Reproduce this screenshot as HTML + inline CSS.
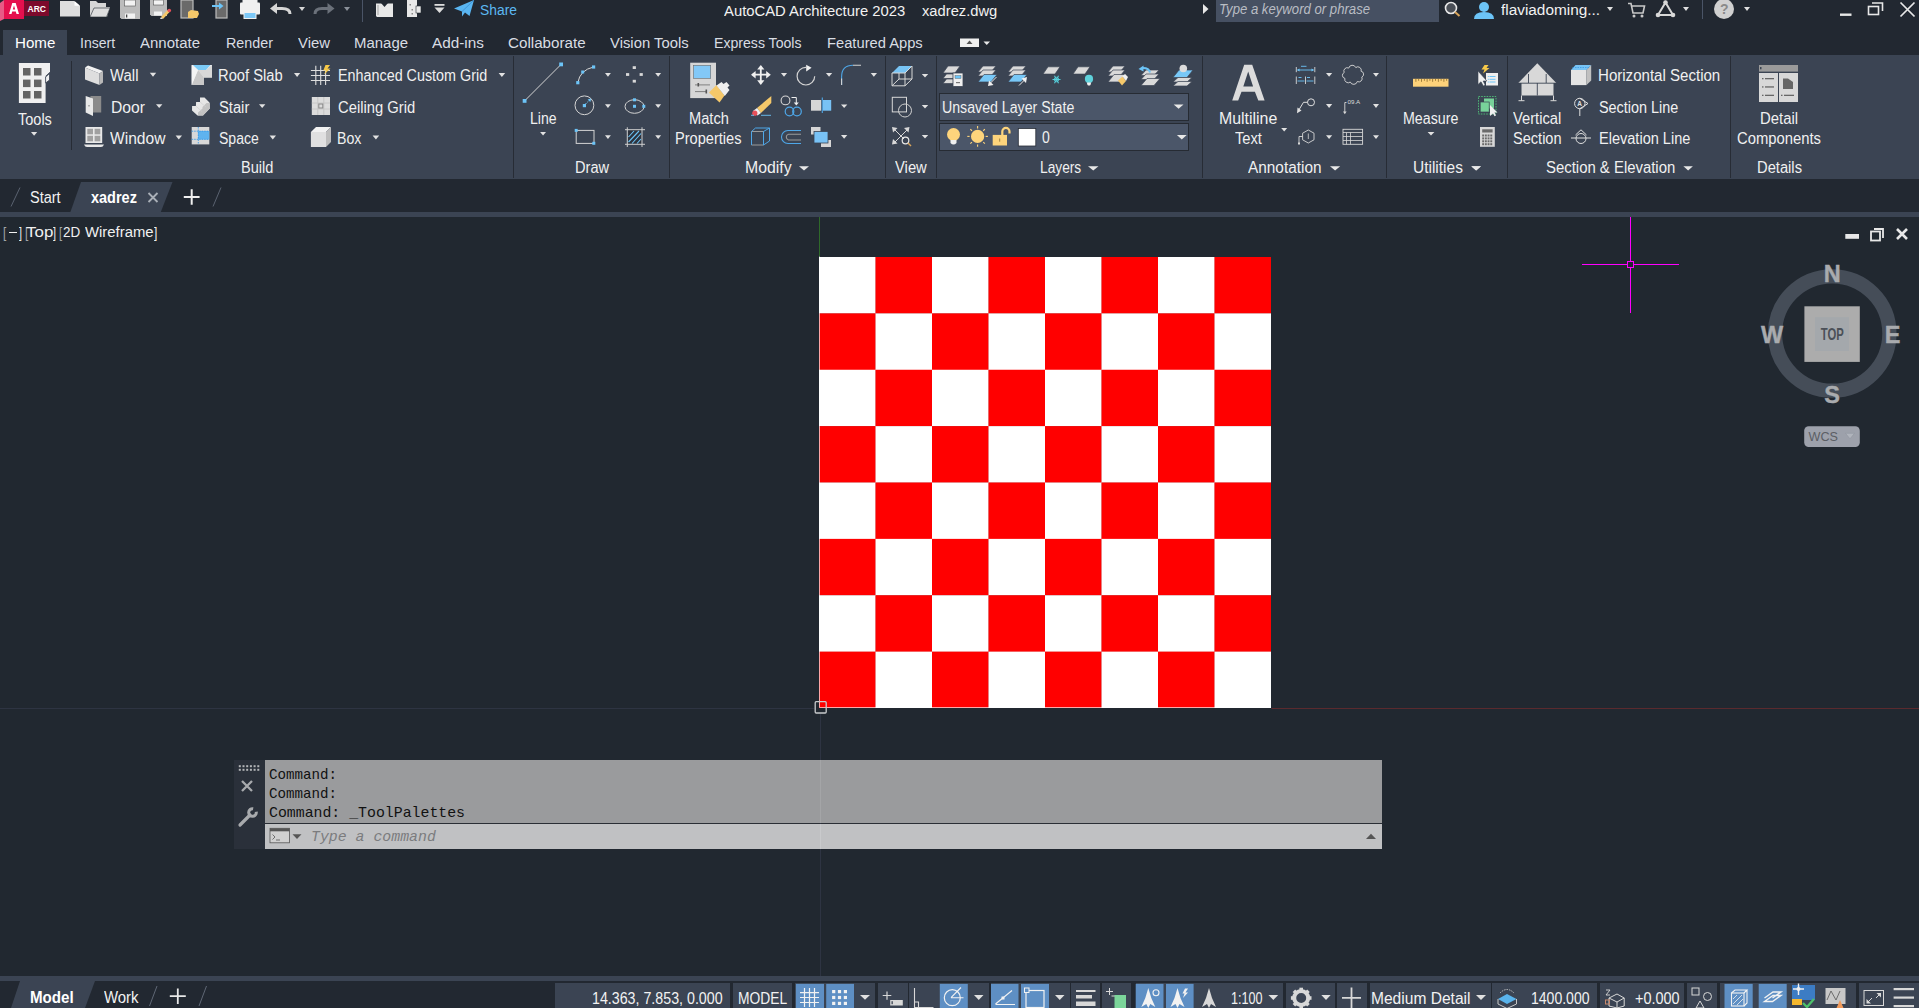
<!DOCTYPE html><html><head><meta charset="utf-8"><style>html,body{margin:0;padding:0;width:1919px;height:1008px;overflow:hidden;background:#222831;}.a{position:absolute;}.t{white-space:pre;}svg{overflow:visible;}</style></head><body><div class="a" style="left:0px;top:0px;width:1919px;height:55px;background:#222831;"></div>
<div class="a" style="left:1216px;top:0px;width:223px;height:22px;background:#465062;"></div>
<div class="a t" style="left:1219.00px;top:1.95px;font-family:'Liberation Sans', sans-serif;font-size:14px;line-height:14px;color:#b9bdc4;font-style:italic;transform:scaleX(0.9391);transform-origin:0 0;">Type a keyword or phrase</div>
<div class="a t" style="left:480.00px;top:1.68px;font-family:'Liberation Sans', sans-serif;font-size:15.5px;line-height:15.5px;color:#5cb8f2;transform:scaleX(0.8937);transform-origin:0 0;">Share</div>
<div class="a t" style="left:1501.00px;top:2.38px;font-family:'Liberation Sans', sans-serif;font-size:15.5px;line-height:15.5px;color:#f2f2f2;transform:scaleX(0.9910);transform-origin:0 0;">flaviadoming...</div>
<div class="a" style="left:3px;top:30px;width:64px;height:25px;background:#3b4453;"></div>
<div class="a t" style="left:14.70px;top:35.38px;font-family:'Liberation Sans', sans-serif;font-size:15.5px;line-height:15.5px;color:#ffffff;transform:scaleX(0.9758);transform-origin:0 0;">Home</div>
<div class="a t" style="left:80.40px;top:35.38px;font-family:'Liberation Sans', sans-serif;font-size:15.5px;line-height:15.5px;color:#d9dde3;transform:scaleX(0.9072);transform-origin:0 0;">Insert</div>
<div class="a t" style="left:140.00px;top:35.38px;font-family:'Liberation Sans', sans-serif;font-size:15.5px;line-height:15.5px;color:#d9dde3;transform:scaleX(0.9662);transform-origin:0 0;">Annotate</div>
<div class="a t" style="left:226.00px;top:35.38px;font-family:'Liberation Sans', sans-serif;font-size:15.5px;line-height:15.5px;color:#d9dde3;transform:scaleX(0.9252);transform-origin:0 0;">Render</div>
<div class="a t" style="left:298.00px;top:35.38px;font-family:'Liberation Sans', sans-serif;font-size:15.5px;line-height:15.5px;color:#d9dde3;transform:scaleX(0.9581);transform-origin:0 0;">View</div>
<div class="a t" style="left:354.00px;top:35.38px;font-family:'Liberation Sans', sans-serif;font-size:15.5px;line-height:15.5px;color:#d9dde3;transform:scaleX(0.9643);transform-origin:0 0;">Manage</div>
<div class="a t" style="left:432.00px;top:35.38px;font-family:'Liberation Sans', sans-serif;font-size:15.5px;line-height:15.5px;color:#d9dde3;transform:scaleX(0.9886);transform-origin:0 0;">Add-ins</div>
<div class="a t" style="left:508.00px;top:35.38px;font-family:'Liberation Sans', sans-serif;font-size:15.5px;line-height:15.5px;color:#d9dde3;transform:scaleX(0.9786);transform-origin:0 0;">Collaborate</div>
<div class="a t" style="left:610.40px;top:35.38px;font-family:'Liberation Sans', sans-serif;font-size:15.5px;line-height:15.5px;color:#d9dde3;transform:scaleX(0.9574);transform-origin:0 0;">Vision Tools</div>
<div class="a t" style="left:714.20px;top:35.38px;font-family:'Liberation Sans', sans-serif;font-size:15.5px;line-height:15.5px;color:#d9dde3;transform:scaleX(0.9096);transform-origin:0 0;">Express Tools</div>
<div class="a t" style="left:826.50px;top:35.38px;font-family:'Liberation Sans', sans-serif;font-size:15.5px;line-height:15.5px;color:#d9dde3;transform:scaleX(0.9494);transform-origin:0 0;">Featured Apps</div>
<div class="a t" style="left:724.40px;top:2.88px;font-family:'Liberation Sans', sans-serif;font-size:15.5px;line-height:15.5px;color:#f2f2f2;transform:scaleX(0.9562);transform-origin:0 0;">AutoCAD Architecture 2023</div>
<div class="a t" style="left:922.00px;top:2.88px;font-family:'Liberation Sans', sans-serif;font-size:15.5px;line-height:15.5px;color:#f2f2f2;transform:scaleX(0.9496);transform-origin:0 0;">xadrez.dwg</div>
<div class="a" style="left:0px;top:55px;width:1919px;height:124px;background:#3b4453;"></div>
<div class="a" style="left:71px;top:61px;width:1px;height:89px;background:#272c35;"></div>
<div class="a" style="left:513px;top:56px;width:1px;height:122px;background:#272c35;"></div>
<div class="a" style="left:669px;top:56px;width:1px;height:122px;background:#272c35;"></div>
<div class="a" style="left:885px;top:56px;width:1px;height:122px;background:#272c35;"></div>
<div class="a" style="left:936px;top:56px;width:1px;height:122px;background:#272c35;"></div>
<div class="a" style="left:1202px;top:56px;width:1px;height:122px;background:#272c35;"></div>
<div class="a" style="left:1386px;top:56px;width:1px;height:122px;background:#272c35;"></div>
<div class="a" style="left:1507px;top:56px;width:1px;height:122px;background:#272c35;"></div>
<div class="a" style="left:1730px;top:56px;width:1px;height:122px;background:#272c35;"></div>
<div class="a t" style="left:17.60px;top:111.96px;font-family:'Liberation Sans', sans-serif;font-size:16px;line-height:16px;color:#f0f0f0;transform:scaleX(0.9064);transform-origin:0 0;">Tools</div>
<div class="a t" style="left:110.00px;top:68.46px;font-family:'Liberation Sans', sans-serif;font-size:16px;line-height:16px;color:#f0f0f0;transform:scaleX(0.9344);transform-origin:0 0;">Wall</div>
<div class="a t" style="left:111.00px;top:99.76px;font-family:'Liberation Sans', sans-serif;font-size:16px;line-height:16px;color:#f0f0f0;transform:scaleX(0.9798);transform-origin:0 0;">Door</div>
<div class="a t" style="left:110.00px;top:130.96px;font-family:'Liberation Sans', sans-serif;font-size:16px;line-height:16px;color:#f0f0f0;transform:scaleX(0.9737);transform-origin:0 0;">Window</div>
<div class="a t" style="left:218.00px;top:68.46px;font-family:'Liberation Sans', sans-serif;font-size:16px;line-height:16px;color:#f0f0f0;transform:scaleX(0.9203);transform-origin:0 0;">Roof Slab</div>
<div class="a t" style="left:219.00px;top:99.76px;font-family:'Liberation Sans', sans-serif;font-size:16px;line-height:16px;color:#f0f0f0;transform:scaleX(0.9210);transform-origin:0 0;">Stair</div>
<div class="a t" style="left:219.00px;top:130.96px;font-family:'Liberation Sans', sans-serif;font-size:16px;line-height:16px;color:#f0f0f0;transform:scaleX(0.8767);transform-origin:0 0;">Space</div>
<div class="a t" style="left:338.20px;top:68.46px;font-family:'Liberation Sans', sans-serif;font-size:16px;line-height:16px;color:#f0f0f0;transform:scaleX(0.8966);transform-origin:0 0;">Enhanced Custom Grid</div>
<div class="a t" style="left:338.20px;top:99.76px;font-family:'Liberation Sans', sans-serif;font-size:16px;line-height:16px;color:#f0f0f0;transform:scaleX(0.9234);transform-origin:0 0;">Ceiling Grid</div>
<div class="a t" style="left:337.40px;top:130.96px;font-family:'Liberation Sans', sans-serif;font-size:16px;line-height:16px;color:#f0f0f0;transform:scaleX(0.8841);transform-origin:0 0;">Box</div>
<div class="a t" style="left:240.60px;top:160.46px;font-family:'Liberation Sans', sans-serif;font-size:16px;line-height:16px;color:#f0f0f0;transform:scaleX(0.9101);transform-origin:0 0;">Build</div>
<div class="a t" style="left:530.00px;top:111.46px;font-family:'Liberation Sans', sans-serif;font-size:16px;line-height:16px;color:#f0f0f0;transform:scaleX(0.8779);transform-origin:0 0;">Line</div>
<div class="a t" style="left:574.50px;top:160.46px;font-family:'Liberation Sans', sans-serif;font-size:16px;line-height:16px;color:#f0f0f0;transform:scaleX(0.9118);transform-origin:0 0;">Draw</div>
<div class="a t" style="left:688.60px;top:111.46px;font-family:'Liberation Sans', sans-serif;font-size:16px;line-height:16px;color:#f0f0f0;transform:scaleX(0.9151);transform-origin:0 0;">Match</div>
<div class="a t" style="left:675.40px;top:130.96px;font-family:'Liberation Sans', sans-serif;font-size:16px;line-height:16px;color:#f0f0f0;transform:scaleX(0.9122);transform-origin:0 0;">Properties</div>
<div class="a t" style="left:745.30px;top:160.46px;font-family:'Liberation Sans', sans-serif;font-size:16px;line-height:16px;color:#f0f0f0;transform:scaleX(0.9894);transform-origin:0 0;">Modify</div>
<div class="a t" style="left:895.00px;top:160.46px;font-family:'Liberation Sans', sans-serif;font-size:16px;line-height:16px;color:#f0f0f0;transform:scaleX(0.9244);transform-origin:0 0;">View</div>
<div class="a t" style="left:1040.20px;top:160.46px;font-family:'Liberation Sans', sans-serif;font-size:16px;line-height:16px;color:#f0f0f0;transform:scaleX(0.8583);transform-origin:0 0;">Layers</div>
<div class="a t" style="left:1219.00px;top:111.46px;font-family:'Liberation Sans', sans-serif;font-size:16px;line-height:16px;color:#f0f0f0;transform:scaleX(0.9932);transform-origin:0 0;">Multiline</div>
<div class="a t" style="left:1235.00px;top:130.96px;font-family:'Liberation Sans', sans-serif;font-size:16px;line-height:16px;color:#f0f0f0;transform:scaleX(0.9181);transform-origin:0 0;">Text</div>
<div class="a t" style="left:1248.40px;top:160.46px;font-family:'Liberation Sans', sans-serif;font-size:16px;line-height:16px;color:#f0f0f0;transform:scaleX(0.9608);transform-origin:0 0;">Annotation</div>
<div class="a t" style="left:1403.30px;top:111.46px;font-family:'Liberation Sans', sans-serif;font-size:16px;line-height:16px;color:#f0f0f0;transform:scaleX(0.8892);transform-origin:0 0;">Measure</div>
<div class="a t" style="left:1413.00px;top:160.46px;font-family:'Liberation Sans', sans-serif;font-size:16px;line-height:16px;color:#f0f0f0;transform:scaleX(0.9671);transform-origin:0 0;">Utilities</div>
<div class="a t" style="left:1512.90px;top:111.46px;font-family:'Liberation Sans', sans-serif;font-size:16px;line-height:16px;color:#f0f0f0;transform:scaleX(0.9200);transform-origin:0 0;">Vertical</div>
<div class="a t" style="left:1513.40px;top:130.96px;font-family:'Liberation Sans', sans-serif;font-size:16px;line-height:16px;color:#f0f0f0;transform:scaleX(0.9101);transform-origin:0 0;">Section</div>
<div class="a t" style="left:1597.70px;top:68.46px;font-family:'Liberation Sans', sans-serif;font-size:16px;line-height:16px;color:#f0f0f0;transform:scaleX(0.9414);transform-origin:0 0;">Horizontal Section</div>
<div class="a t" style="left:1598.50px;top:99.76px;font-family:'Liberation Sans', sans-serif;font-size:16px;line-height:16px;color:#f0f0f0;transform:scaleX(0.9001);transform-origin:0 0;">Section Line</div>
<div class="a t" style="left:1598.50px;top:130.96px;font-family:'Liberation Sans', sans-serif;font-size:16px;line-height:16px;color:#f0f0f0;transform:scaleX(0.9085);transform-origin:0 0;">Elevation Line</div>
<div class="a t" style="left:1545.70px;top:160.46px;font-family:'Liberation Sans', sans-serif;font-size:16px;line-height:16px;color:#f0f0f0;transform:scaleX(0.9316);transform-origin:0 0;">Section &amp; Elevation</div>
<div class="a t" style="left:1760.00px;top:111.46px;font-family:'Liberation Sans', sans-serif;font-size:16px;line-height:16px;color:#f0f0f0;transform:scaleX(0.9291);transform-origin:0 0;">Detail</div>
<div class="a t" style="left:1737.00px;top:130.96px;font-family:'Liberation Sans', sans-serif;font-size:16px;line-height:16px;color:#f0f0f0;transform:scaleX(0.9261);transform-origin:0 0;">Components</div>
<div class="a t" style="left:1757.00px;top:160.46px;font-family:'Liberation Sans', sans-serif;font-size:16px;line-height:16px;color:#f0f0f0;transform:scaleX(0.9202);transform-origin:0 0;">Details</div>
<div class="a" style="left:939px;top:93px;width:250px;height:28px;background:#4b5669;border:1px solid #262b33;box-sizing:border-box;"></div>
<div class="a" style="left:939px;top:123px;width:250px;height:28px;background:#4b5669;border:1px solid #262b33;box-sizing:border-box;"></div>
<div class="a t" style="left:942.20px;top:99.96px;font-family:'Liberation Sans', sans-serif;font-size:16px;line-height:16px;color:#f0f0f0;transform:scaleX(0.8855);transform-origin:0 0;">Unsaved Layer State</div>
<div class="a t" style="left:1042.20px;top:130.46px;font-family:'Liberation Sans', sans-serif;font-size:16px;line-height:16px;color:#f0f0f0;transform:scaleX(0.8764);transform-origin:0 0;">0</div>
<div class="a" style="left:0px;top:179px;width:1919px;height:33px;background:#222831;"></div>
<div class="a" style="left:0px;top:212px;width:1919px;height:5px;background:#3b4453;"></div>
<svg class="a" style="left:0px;top:179px;" width="250" height="33" viewBox="0 0 250 33" preserveAspectRatio="none"><polygon points="81,3 172.5,3 160.8,33 70.4,33" fill="#3b4453"/></svg>
<div class="a t" style="left:30.20px;top:190.46px;font-family:'Liberation Sans', sans-serif;font-size:16px;line-height:16px;color:#f2f2f2;transform:scaleX(0.9053);transform-origin:0 0;">Start</div>
<div class="a t" style="left:91.00px;top:190.46px;font-family:'Liberation Sans', sans-serif;font-size:16px;line-height:16px;color:#ffffff;font-weight:700;transform:scaleX(0.9053);transform-origin:0 0;">xadrez</div>
<div class="a" style="left:0px;top:217px;width:1919px;height:759px;background:#212830;"></div>
<div class="a t" style="left:3.05px;top:224.88px;font-family:'Liberation Sans', sans-serif;font-size:15.5px;line-height:15.5px;color:#a4a6a9;transform:scaleX(0.7558);transform-origin:0 0;">[</div>
<div class="a t" style="left:19.00px;top:224.88px;font-family:'Liberation Sans', sans-serif;font-size:15.5px;line-height:15.5px;color:#f0f0f0;transform:scaleX(0.6977);transform-origin:0 0;">]</div>
<div class="a t" style="left:25.10px;top:224.88px;font-family:'Liberation Sans', sans-serif;font-size:15.5px;line-height:15.5px;color:#a4a6a9;transform:scaleX(0.7674);transform-origin:0 0;">[</div>
<div class="a t" style="left:53.00px;top:224.88px;font-family:'Liberation Sans', sans-serif;font-size:15.5px;line-height:15.5px;color:#f0f0f0;transform:scaleX(0.6977);transform-origin:0 0;">]</div>
<div class="a t" style="left:59.30px;top:224.88px;font-family:'Liberation Sans', sans-serif;font-size:15.5px;line-height:15.5px;color:#a4a6a9;transform:scaleX(0.7209);transform-origin:0 0;">[</div>
<div class="a t" style="left:154.10px;top:224.88px;font-family:'Liberation Sans', sans-serif;font-size:15.5px;line-height:15.5px;color:#f0f0f0;transform:scaleX(0.7674);transform-origin:0 0;">]</div>
<div class="a t" style="left:25.70px;top:223.88px;font-family:'Liberation Sans', sans-serif;font-size:15.5px;line-height:15.5px;color:#f0f0f0;transform:scaleX(1.0920);transform-origin:0 0;">Top</div>
<div class="a t" style="left:62.50px;top:223.88px;font-family:'Liberation Sans', sans-serif;font-size:15.5px;line-height:15.5px;color:#f0f0f0;transform:scaleX(0.8687);transform-origin:0 0;">2D</div>
<div class="a t" style="left:85.20px;top:223.88px;font-family:'Liberation Sans', sans-serif;font-size:15.5px;line-height:15.5px;color:#f0f0f0;transform:scaleX(0.9594);transform-origin:0 0;">Wireframe</div>
<div class="a" style="left:8.9px;top:231.7px;width:8.2px;height:1.4px;background:#f0f0f0;"></div>
<svg class="a" style="left:819px;top:257px;" width="452" height="451" viewBox="0 0 452 452" preserveAspectRatio="none"><rect x="0.00" y="0.00" width="56.80" height="56.80" fill="#ffffff"/><rect x="56.50" y="0.00" width="56.80" height="56.80" fill="#ff0000"/><rect x="113.00" y="0.00" width="56.80" height="56.80" fill="#ffffff"/><rect x="169.50" y="0.00" width="56.80" height="56.80" fill="#ff0000"/><rect x="226.00" y="0.00" width="56.80" height="56.80" fill="#ffffff"/><rect x="282.50" y="0.00" width="56.80" height="56.80" fill="#ff0000"/><rect x="339.00" y="0.00" width="56.80" height="56.80" fill="#ffffff"/><rect x="395.50" y="0.00" width="56.50" height="56.80" fill="#ff0000"/><rect x="0.00" y="56.50" width="56.80" height="56.80" fill="#ff0000"/><rect x="56.50" y="56.50" width="56.80" height="56.80" fill="#ffffff"/><rect x="113.00" y="56.50" width="56.80" height="56.80" fill="#ff0000"/><rect x="169.50" y="56.50" width="56.80" height="56.80" fill="#ffffff"/><rect x="226.00" y="56.50" width="56.80" height="56.80" fill="#ff0000"/><rect x="282.50" y="56.50" width="56.80" height="56.80" fill="#ffffff"/><rect x="339.00" y="56.50" width="56.80" height="56.80" fill="#ff0000"/><rect x="395.50" y="56.50" width="56.50" height="56.80" fill="#ffffff"/><rect x="0.00" y="113.00" width="56.80" height="56.80" fill="#ffffff"/><rect x="56.50" y="113.00" width="56.80" height="56.80" fill="#ff0000"/><rect x="113.00" y="113.00" width="56.80" height="56.80" fill="#ffffff"/><rect x="169.50" y="113.00" width="56.80" height="56.80" fill="#ff0000"/><rect x="226.00" y="113.00" width="56.80" height="56.80" fill="#ffffff"/><rect x="282.50" y="113.00" width="56.80" height="56.80" fill="#ff0000"/><rect x="339.00" y="113.00" width="56.80" height="56.80" fill="#ffffff"/><rect x="395.50" y="113.00" width="56.50" height="56.80" fill="#ff0000"/><rect x="0.00" y="169.50" width="56.80" height="56.80" fill="#ff0000"/><rect x="56.50" y="169.50" width="56.80" height="56.80" fill="#ffffff"/><rect x="113.00" y="169.50" width="56.80" height="56.80" fill="#ff0000"/><rect x="169.50" y="169.50" width="56.80" height="56.80" fill="#ffffff"/><rect x="226.00" y="169.50" width="56.80" height="56.80" fill="#ff0000"/><rect x="282.50" y="169.50" width="56.80" height="56.80" fill="#ffffff"/><rect x="339.00" y="169.50" width="56.80" height="56.80" fill="#ff0000"/><rect x="395.50" y="169.50" width="56.50" height="56.80" fill="#ffffff"/><rect x="0.00" y="226.00" width="56.80" height="56.80" fill="#ffffff"/><rect x="56.50" y="226.00" width="56.80" height="56.80" fill="#ff0000"/><rect x="113.00" y="226.00" width="56.80" height="56.80" fill="#ffffff"/><rect x="169.50" y="226.00" width="56.80" height="56.80" fill="#ff0000"/><rect x="226.00" y="226.00" width="56.80" height="56.80" fill="#ffffff"/><rect x="282.50" y="226.00" width="56.80" height="56.80" fill="#ff0000"/><rect x="339.00" y="226.00" width="56.80" height="56.80" fill="#ffffff"/><rect x="395.50" y="226.00" width="56.50" height="56.80" fill="#ff0000"/><rect x="0.00" y="282.50" width="56.80" height="56.80" fill="#ff0000"/><rect x="56.50" y="282.50" width="56.80" height="56.80" fill="#ffffff"/><rect x="113.00" y="282.50" width="56.80" height="56.80" fill="#ff0000"/><rect x="169.50" y="282.50" width="56.80" height="56.80" fill="#ffffff"/><rect x="226.00" y="282.50" width="56.80" height="56.80" fill="#ff0000"/><rect x="282.50" y="282.50" width="56.80" height="56.80" fill="#ffffff"/><rect x="339.00" y="282.50" width="56.80" height="56.80" fill="#ff0000"/><rect x="395.50" y="282.50" width="56.50" height="56.80" fill="#ffffff"/><rect x="0.00" y="339.00" width="56.80" height="56.80" fill="#ffffff"/><rect x="56.50" y="339.00" width="56.80" height="56.80" fill="#ff0000"/><rect x="113.00" y="339.00" width="56.80" height="56.80" fill="#ffffff"/><rect x="169.50" y="339.00" width="56.80" height="56.80" fill="#ff0000"/><rect x="226.00" y="339.00" width="56.80" height="56.80" fill="#ffffff"/><rect x="282.50" y="339.00" width="56.80" height="56.80" fill="#ff0000"/><rect x="339.00" y="339.00" width="56.80" height="56.80" fill="#ffffff"/><rect x="395.50" y="339.00" width="56.50" height="56.80" fill="#ff0000"/><rect x="0.00" y="395.50" width="56.80" height="56.50" fill="#ff0000"/><rect x="56.50" y="395.50" width="56.80" height="56.50" fill="#ffffff"/><rect x="113.00" y="395.50" width="56.80" height="56.50" fill="#ff0000"/><rect x="169.50" y="395.50" width="56.80" height="56.50" fill="#ffffff"/><rect x="226.00" y="395.50" width="56.80" height="56.50" fill="#ff0000"/><rect x="282.50" y="395.50" width="56.80" height="56.50" fill="#ffffff"/><rect x="339.00" y="395.50" width="56.80" height="56.50" fill="#ff0000"/><rect x="395.50" y="395.50" width="56.50" height="56.50" fill="#ffffff"/></svg>
<div class="a" style="left:234px;top:760px;width:31px;height:89px;background:#2a303a;"></div>
<div class="a" style="left:265px;top:760px;width:1117px;height:63px;background:#9a9b9d;"></div>
<div class="a" style="left:265px;top:823px;width:1117px;height:1px;background:#2a2e35;"></div>
<div class="a" style="left:265px;top:824px;width:1117px;height:25px;background:#c0c1c3;"></div>
<div class="a t" style="left:268.70px;top:767.50px;font-family:'Liberation Mono', monospace;font-size:15px;line-height:15px;color:#111111;transform:scaleX(0.9444);transform-origin:0 0;">Command:</div>
<div class="a t" style="left:268.70px;top:786.50px;font-family:'Liberation Mono', monospace;font-size:15px;line-height:15px;color:#111111;transform:scaleX(0.9444);transform-origin:0 0;">Command:</div>
<div class="a t" style="left:268.70px;top:805.50px;font-family:'Liberation Mono', monospace;font-size:15px;line-height:15px;color:#111111;transform:scaleX(0.9899);transform-origin:0 0;">Command: _ToolPalettes</div>
<div class="a t" style="left:310.70px;top:829.79px;font-family:'Liberation Mono', monospace;font-size:15px;line-height:15px;color:#7b7c7e;font-style:italic;transform:scaleX(0.9905);transform-origin:0 0;">Type a command</div>
<div class="a" style="left:0px;top:976px;width:1919px;height:5px;background:#3b4453;"></div>
<div class="a" style="left:0px;top:981px;width:1919px;height:27px;background:#222831;"></div>
<svg class="a" style="left:0px;top:981px;" width="100" height="27" viewBox="0 0 100 27" preserveAspectRatio="none"><polygon points="20,0 95,0 85,27 11,27" fill="#3b4453"/></svg>
<div class="a t" style="left:30.30px;top:990.46px;font-family:'Liberation Sans', sans-serif;font-size:16px;line-height:16px;color:#ffffff;font-weight:700;transform:scaleX(0.9459);transform-origin:0 0;">Model</div>
<div class="a t" style="left:104.00px;top:990.46px;font-family:'Liberation Sans', sans-serif;font-size:16px;line-height:16px;color:#f2f2f2;transform:scaleX(0.9326);transform-origin:0 0;">Work</div>
<div class="a" style="left:555px;top:983px;width:1364px;height:25px;background:#3b4453;"></div>
<div class="a t" style="left:592.30px;top:991.06px;font-family:'Liberation Sans', sans-serif;font-size:16px;line-height:16px;color:#f2f2f2;transform:scaleX(0.8896);transform-origin:0 0;">14.363, 7.853, 0.000</div>
<div class="a t" style="left:737.90px;top:991.06px;font-family:'Liberation Sans', sans-serif;font-size:16px;line-height:16px;color:#f2f2f2;transform:scaleX(0.8647);transform-origin:0 0;">MODEL</div>
<div class="a t" style="left:1231.30px;top:991.06px;font-family:'Liberation Sans', sans-serif;font-size:16px;line-height:16px;color:#f2f2f2;transform:scaleX(0.7875);transform-origin:0 0;">1:100</div>
<div class="a t" style="left:1371.00px;top:991.06px;font-family:'Liberation Sans', sans-serif;font-size:16px;line-height:16px;color:#f2f2f2;transform:scaleX(0.9726);transform-origin:0 0;">Medium Detail</div>
<div class="a t" style="left:1530.50px;top:991.06px;font-family:'Liberation Sans', sans-serif;font-size:16px;line-height:16px;color:#f2f2f2;transform:scaleX(0.8771);transform-origin:0 0;">1400.000</div>
<div class="a t" style="left:1635.00px;top:991.06px;font-family:'Liberation Sans', sans-serif;font-size:16px;line-height:16px;color:#f2f2f2;transform:scaleX(0.9028);transform-origin:0 0;">+0.000</div>
<div class="a" style="left:730.2px;top:983px;width:2.7px;height:25px;background:#222831;"></div>
<div class="a" style="left:792.1px;top:983px;width:2.8px;height:25px;background:#222831;"></div>
<div class="a" style="left:875.2px;top:983px;width:2.6px;height:25px;background:#222831;"></div>
<div class="a" style="left:907.6px;top:983px;width:1.9px;height:25px;background:#222831;"></div>
<div class="a" style="left:988.6px;top:983px;width:2.4px;height:25px;background:#222831;"></div>
<div class="a" style="left:1069.6px;top:983px;width:1.9px;height:25px;background:#222831;"></div>
<div class="a" style="left:1100.4px;top:983px;width:2.0px;height:25px;background:#222831;"></div>
<div class="a" style="left:1131.3px;top:983px;width:4.4px;height:25px;background:#222831;"></div>
<div class="a" style="left:1282.9px;top:983px;width:3.1px;height:25px;background:#222831;"></div>
<div class="a" style="left:1335.4px;top:983px;width:1.9px;height:25px;background:#222831;"></div>
<div class="a" style="left:1366.7px;top:983px;width:3.3px;height:25px;background:#222831;"></div>
<div class="a" style="left:1490.7px;top:983px;width:1.3px;height:25px;background:#222831;"></div>
<div class="a" style="left:1596.9px;top:983px;width:3.1px;height:25px;background:#222831;"></div>
<div class="a" style="left:1684.2px;top:983px;width:2.5px;height:25px;background:#222831;"></div>
<div class="a" style="left:1716.9px;top:983px;width:3.1px;height:25px;background:#222831;"></div>
<div class="a" style="left:1855.8px;top:983px;width:3.3px;height:25px;background:#222831;"></div>
<svg class="a" style="left:0;top:0" width="1919" height="1008" viewBox="0 0 1919 1008"><polygon points="18.9,63 50,63 50,72 45.6,76 45.6,103 18.9,103" fill="#f0f0f0"/><polygon points="46,76 50,72 50,80 46,84" fill="#3b4453"/><polygon points="45.6,77 49.5,73.5 49.5,80 45.6,83" fill="#f0f0f0" stroke="#3b4453" stroke-width="0.8"/><rect x="23" y="68" width="7.5" height="7.5" fill="#646464"/><rect x="34" y="68" width="7.5" height="7.5" fill="#646464"/><rect x="23" y="79.6" width="7.5" height="7.5" fill="#646464"/><rect x="34" y="79.6" width="7.5" height="7.5" fill="#646464"/><rect x="23" y="91" width="7.5" height="7.5" fill="#646464"/><rect x="34" y="91" width="7.5" height="7.5" fill="#646464"/><polygon points="31,131.9 37.2,131.9 34.1,135.70000000000002" fill="#e2e2e2"/><polygon points="85,67.5 88,65.5 103,71 99.5,73.5" fill="#f2f2f2"/><polygon points="85,67.5 99.5,73.5 99.5,85 85,79.5" fill="#dedede"/><polygon points="99.5,73.5 103,71 103,82.5 99.5,85" fill="#b8b8b8"/><polygon points="149.8,72.8 156.20000000000002,72.8 153.0,76.7" fill="#e2e2e2"/><rect x="90.5" y="96" width="10.7" height="16.5" fill="#8a8a8a"/><polygon points="85.7,96 93,98.5 93,116 85.7,112.5" fill="#e8e8e8"/><rect x="88.5" y="105" width="1" height="1.5" fill="#777"/><polygon points="156,104.2 162.4,104.2 159.2,108.10000000000001" fill="#e2e2e2"/><rect x="85.5" y="127" width="16.7" height="16" fill="#e8e8e8"/><rect x="87.3" y="128.8" width="5.7" height="5.5" fill="#a0a0a0"/><rect x="94.6" y="128.8" width="5.7" height="5.5" fill="#a0a0a0"/><rect x="87.3" y="135.8" width="5.7" height="5.5" fill="#a0a0a0"/><rect x="94.6" y="135.8" width="5.7" height="5.5" fill="#a0a0a0"/><path d="M84,144.5 H104 Q103,147 101,147 H87 Q85,147 84,144.5Z" fill="#e8e8e8"/><polygon points="175.6,135.5 182.0,135.5 178.79999999999998,139.4" fill="#e2e2e2"/><polygon points="191.7,65 212,65 212,77.5 204,77.5 204,85 191.7,85" fill="#f0f0f0"/><polygon points="193,65 210.5,65 206,70 198,70" fill="#7ccbf7"/><polygon points="198,70 206,70 212,65 212,77.5 204,77.5" fill="#d8d8d8"/><polygon points="198,70 204,77.5 204,85 191.7,85" fill="#c8c8c8"/><polygon points="191.7,65 198,70 191.7,85" fill="#f4f4f4"/><polygon points="294,73 300.2,73 297.1,77" fill="#e2e2e2"/><polygon points="192.1,106.1 195.9,106.1 196.1,102.1 200,102 200,97.5 204.5,97.5 209.5,102.5 209.8,108.5 203,115.5 197.5,115.5 192,110.5" fill="#e6e6e6"/><polygon points="198,112.5 202.5,108.5 202.5,107 206.5,103 209.8,103 209.8,108.5 203,115.5 198,115.5" fill="#c2c2c2"/><path d="M195.9,106.1 L202,111.5 M200,102 L206,107" stroke="#d0d0d0" stroke-width="0.7"/><polygon points="259,104.2 265.4,104.2 262.2,108.10000000000001" fill="#e2e2e2"/><rect x="191.7" y="127" width="17.6" height="17.4" fill="#d8d8d8"/><rect x="198" y="131" width="11.3" height="8.5" fill="#5fb3ef"/><path d="M198.3,127 V144.4 M191.7,131.2 H209.3 M191.7,139.3 H209.3" stroke="#3a9ae6" stroke-width="0.9" stroke-dasharray="1.5,1"/><polygon points="269.6,135.5 276.0,135.5 272.8,139.4" fill="#e2e2e2"/><path d="M315.8,65.8 V85 M320.7,65.8 V85 M325.6,70 V85 M310.9,70.5 H330 M310.9,75.5 H330 M310.9,80.5 H330" stroke="#dedede" stroke-width="1.1"/><polygon points="325.5,65 330,65 327.5,68.5 330.5,68.5 324,74.5 326,70.5 323.3,70.5" fill="#f7c948"/><polygon points="498.6,73 505.20000000000005,73 501.90000000000003,77" fill="#e2e2e2"/><rect x="311.8" y="97" width="18.2" height="18" fill="#dcdcdc"/><path d="M317.8,97 V115 M323.8,97 V115 M311.8,103 H330 M311.8,109 H330" stroke="#c4c4c4" stroke-width="0.9"/><rect x="318.8" y="104" width="4" height="4" fill="none" stroke="#888" stroke-width="1"/><polygon points="310.9,132 316,127 331,127 326,132" fill="#f2f2f2"/><rect x="310.9" y="132" width="15.1" height="15" fill="#e0e0e0"/><polygon points="326,132 331,127 331,142 326,147" fill="#bdbdbd"/><polygon points="372.6,135.5 379.20000000000005,135.5 375.90000000000003,139.5" fill="#e2e2e2"/><line x1="524.6" y1="100.9" x2="561.1" y2="64.4" stroke="#d4d4d4" stroke-width="1"/><rect x="522.7" y="99.0" width="3.8" height="3.8" fill="#6cc4f7"/><rect x="559.2" y="62.50000000000001" width="3.8" height="3.8" fill="#6cc4f7"/><polygon points="540.1,132 546.0,132 543.0500000000001,135.6" fill="#e2e2e2"/><path d="M577.8,82.7 Q580,70 593.6,67" fill="none" stroke="#d4d4d4" stroke-width="1"/><rect x="576.1999999999999" y="81.10000000000001" width="3.2" height="3.2" fill="#6cc4f7"/><rect x="581.2" y="70.5" width="3.0" height="3.0" fill="#6cc4f7"/><rect x="592.0" y="65.4" width="3.2" height="3.2" fill="#6cc4f7"/><polygon points="605,73 610.9,73 607.95,76.7" fill="#e2e2e2"/><rect x="632.6999999999999" y="66.19999999999999" width="3.2" height="2.8" fill="#d8d8d8"/><rect x="626.0" y="73.1" width="3.2" height="2.8" fill="#d8d8d8"/><rect x="639.6" y="73.1" width="3.2" height="2.8" fill="#d8d8d8"/><rect x="632.6999999999999" y="79.8" width="3.2" height="2.8" fill="#d8d8d8"/><polygon points="655.2,73 661.1,73 658.1500000000001,76.7" fill="#e2e2e2"/><circle cx="584.4" cy="105.3" r="9.4" fill="none" stroke="#d4d4d4" stroke-width="1"/><path d="M585.5,104 L590,99.6" stroke="#6cc4f7" stroke-width="1" stroke-dasharray="1.5,1"/><polygon points="591.2,98.5 587.6,99.4 590.3,102" fill="#6cc4f7"/><rect x="582.8" y="104.0" width="3.2" height="3.2" fill="#6cc4f7"/><polygon points="605,104.2 610.9,104.2 607.95,107.9" fill="#e2e2e2"/><ellipse cx="634.5" cy="106.5" rx="9.5" ry="6.8" fill="none" stroke="#d4d4d4" stroke-width="1"/><rect x="633.0" y="98.3" width="3.0" height="3.0" fill="#6cc4f7"/><rect x="633.0" y="104.8" width="3.0" height="3.0" fill="#6cc4f7"/><rect x="642.3" y="104.8" width="3.0" height="3.0" fill="#6cc4f7"/><polygon points="655.2,104.2 661.1,104.2 658.1500000000001,107.9" fill="#e2e2e2"/><rect x="576.2" y="130.4" width="17.8" height="13" fill="none" stroke="#d4d4d4" stroke-width="1"/><rect x="574.7" y="128.9" width="3.0" height="3.0" fill="#6cc4f7"/><rect x="592.3" y="141.8" width="3.0" height="3.0" fill="#6cc4f7"/><polygon points="605,135.2 610.9,135.2 607.95,138.89999999999998" fill="#e2e2e2"/><rect x="627.8" y="130.2" width="13.7" height="13.6" fill="#2d333e"/><path d="M627.3,127.3 V147 M642,127.3 V147 M625,129.7 H645 M625,144.3 H645" stroke="#cfcfcf" stroke-width="1"/><path d="M628.5,137 L634,131 M628.5,142 L639,131 M632,143.5 L641,133.5 M637,143.5 L641,139" stroke="#6cc4f7" stroke-width="1.1"/><polygon points="655.2,135.2 661.1,135.2 658.1500000000001,138.89999999999998" fill="#e2e2e2"/><rect x="690.2" y="62.7" width="25.8" height="35.4" fill="#d6d6d6"/><rect x="693.5" y="65.3" width="17.2" height="13" fill="#82c8f7" stroke="#6a6a6a" stroke-width="0.6"/><path d="M695,84.9 H710 M695,91.6 H707" stroke="#777" stroke-width="0.9"/><rect x="697.5" y="83" width="1.6" height="3.5" fill="#555"/><rect x="705.5" y="89.5" width="1.6" height="4" fill="#555"/><polygon points="709,92.5 716.5,85 724.5,95.5 719.5,102.5" fill="#f5c86a"/><polygon points="716.5,85.5 721.5,82 723.5,84 726.5,82 729.5,85.5 727.5,87.5 729.5,90 724.8,96" fill="#efefef"/><path d="M760.8,66.5 V83 M752.5,74.7 H769" stroke="#f0f0f0" stroke-width="1.8"/><polygon points="760.8,65 757.2,69.5 764.4,69.5" fill="#f0f0f0"/><polygon points="760.8,85 757.2,80.3 764.4,80.3" fill="#f0f0f0"/><polygon points="751,74.7 755.6,71 755.6,78.4" fill="#f0f0f0"/><polygon points="770.8,74.7 766.2,71 766.2,78.4" fill="#f0f0f0"/><polygon points="780.9,73.1 787.1,73.1 784.0,76.8" fill="#e2e2e2"/><path d="M806,67.4 A8.8,8.8 0 1 0 814.7,76.2" fill="none" stroke="#d4d4d4" stroke-width="1.2"/><polygon points="806.2,64.8 806.2,71.5 811.6,67.7" fill="#f0f0f0"/><polygon points="825.9,73.1 832.1999999999999,73.1 829.05,76.8" fill="#e2e2e2"/><path d="M841.6,85 V77 Q841.6,65.3 853,65.3" fill="none" stroke="#4ea7e8" stroke-width="1.1"/><path d="M841.6,85 V78.5 M853,65.3 H861" fill="none" stroke="#d4d4d4" stroke-width="1.1"/><polygon points="870.7,73.1 877.0,73.1 873.85,76.8" fill="#e2e2e2"/><polygon points="757,108 771.3,96 771.3,103 761,113" fill="#f5c86a"/><polygon points="753,111 757,108 761,113 757.5,115.5" fill="#f0f0f0"/><circle cx="754.8" cy="113.2" r="2.6" fill="#e8505a"/><path d="M751,115.3 H754 M761,115.3 H771" stroke="#6cc4f7" stroke-width="0.9"/><circle cx="785.5" cy="100.4" r="4.4" fill="none" stroke="#d4d4d4" stroke-width="1.1"/><path d="M791.5,97.5 H796.3 V103" fill="none" stroke="#f0f0f0" stroke-width="1"/><polygon points="793.8,102.5 798.8,102.5 796.3,105.5" fill="#f0f0f0"/><circle cx="789.5" cy="111.5" r="4.3" fill="none" stroke="#4ea7e8" stroke-width="1.2"/><circle cx="797" cy="111.5" r="4.3" fill="none" stroke="#4ea7e8" stroke-width="1.2"/><rect x="811" y="100" width="10.2" height="10.7" fill="#d6d6d6"/><rect x="823" y="100" width="8.2" height="10.7" fill="#78c2f5"/><path d="M822.3,97.5 V113" stroke="#4ea7e8" stroke-width="1.1"/><polygon points="841,104.4 847.3,104.4 844.15,108.0" fill="#e2e2e2"/><path d="M751.5,131.5 H763.5 V145 H751.5 Z" fill="none" stroke="#9a9a9a" stroke-width="1"/><path d="M751.5,131.5 L755.5,128 H769.5 L763.5,131.5 M769.5,128 V141 L763.5,145 M763.5,131.5 V145 M751.5,131.5 V145" fill="none" stroke="#4ea7e8" stroke-width="1"/><path d="M801,130.5 H788 A6.5,6.5 0 0 0 788,143.5 H801" fill="none" stroke="#4ea7e8" stroke-width="1.1"/><path d="M801,134.2 H788.5 A3,3 0 0 0 788.5,140 H801" fill="none" stroke="#9a9a9a" stroke-width="1.1"/><rect x="811" y="127" width="9.5" height="7.5" fill="#d6d6d6"/><rect x="821" y="140" width="10" height="7" fill="#d6d6d6"/><rect x="814" y="131.5" width="14" height="11.5" fill="#78c2f5" stroke="#3b4453" stroke-width="0.8"/><polygon points="841,135.1 847.3,135.1 844.15,138.79999999999998" fill="#e2e2e2"/><polygon points="892,73 899,66 912,66 905,73" fill="#78c4f5"/><path d="M892,73 H905 V85.8 H892 Z M905,73 L912,66 V79 L905,85.8 M892,85.8 L899,79 H912 M899,73 V79" fill="none" stroke="#d8d8d8" stroke-width="1"/><polygon points="921.8,74 928.1999999999999,74 925.0,77.6" fill="#e2e2e2"/><rect x="892.3" y="97.3" width="14.2" height="14.6" fill="none" stroke="#d8d8d8" stroke-width="1"/><circle cx="905" cy="110.5" r="6.5" fill="none" stroke="#d0d0d0" stroke-width="1"/><polygon points="921.8,105 928.1999999999999,105 925.0,108.6" fill="#e2e2e2"/><path d="M893.5,128.5 L904,139 M908.5,128.5 L893.5,143.5" stroke="#d8d8d8" stroke-width="1"/><polygon points="892,127 897.5,128 893,132.5" fill="#d8d8d8"/><polygon points="909.5,127 904,128 908.5,132.5" fill="#d8d8d8"/><polygon points="892,144.5 893,139 897.5,143.5" fill="#d8d8d8"/><circle cx="905.5" cy="140.5" r="3.3" fill="none" stroke="#e8e8e8" stroke-width="1.2"/><path d="M908,143 L911,146" stroke="#d9a45a" stroke-width="1.4"/><polygon points="921.8,135 928.1999999999999,135 925.0,138.6" fill="#e2e2e2"/><polygon points="943,73 948,66 960,66 955,73" fill="#d9d9d9" stroke="#3b4453" stroke-width="0.7"/><polygon points="943,78.5 946.5,74 958.5,74 955,78.5" fill="#d9d9d9" stroke="#3b4453" stroke-width="0.7"/><polygon points="943,83.5 946.5,79 958.5,79 955,83.5" fill="#d9d9d9" stroke="#3b4453" stroke-width="0.7"/><rect x="953" y="73" width="10" height="13.5" fill="#f0f0f0" stroke="#3b4453" stroke-width="0.8"/><rect x="955" y="75.5" width="6" height="3" fill="#6cc4f7" stroke="#555" stroke-width="0.4"/><rect x="956" y="82" width="4" height="1.2" fill="#777"/><polygon points="978,72 983,66 996,66 991,72" fill="#d9d9d9" stroke="#3b4453" stroke-width="0.7"/><polygon points="978,76 983,70 996,70 991,76" fill="#d9d9d9" stroke="#3b4453" stroke-width="0.7"/><polygon points="978,82.0 984,74.5 997,74.5 991,82.0" fill="#78c8f7" stroke="#3b4453" stroke-width="0.7"/><path d="M996.5,77 L990,83.5" stroke="#e8e8e8" stroke-width="1"/><polygon points="988,86 989,80.5 993.5,85" fill="#f0f0f0"/><polygon points="1008,72 1013,66 1026,66 1021,72" fill="#d9d9d9" stroke="#3b4453" stroke-width="0.7"/><polygon points="1008,76 1013,70 1026,70 1021,76" fill="#d9d9d9" stroke="#3b4453" stroke-width="0.7"/><polygon points="1008,82.0 1014,74.5 1027,74.5 1021,82.0" fill="#78c8f7" stroke="#3b4453" stroke-width="0.7"/><path d="M1019,85.5 L1025,79.5" stroke="#e8e8e8" stroke-width="1"/><polygon points="1027,77 1021.5,78.5 1026,83" fill="#f0f0f0"/><polygon points="1043,74.1 1048,66.8 1060,66.8 1055,74.1" fill="#d9d9d9" stroke="#3b4453" stroke-width="0.7"/><g stroke="#56d0dc" stroke-width="1.1"><path d="M1052.5,79.5 H1060.5 M1054.5,75.8 L1058.5,83.2 M1058.5,75.8 L1054.5,83.2"/></g><circle cx="1056.5" cy="79.5" r="2.2" fill="none" stroke="#56d0dc" stroke-width="0.9"/><polygon points="1073,74.1 1078,66.8 1090,66.8 1085,74.1" fill="#d9d9d9" stroke="#3b4453" stroke-width="0.7"/><circle cx="1089" cy="78.9" r="4.1" fill="#5fd2dc"/><path d="M1086.8,82.5 H1091.2 L1090.5,85 Q1089,86.2 1087.5,85 Z" fill="#f0f0f0"/><polygon points="1108,72 1113,66 1125,66 1120,72" fill="#d9d9d9" stroke="#3b4453" stroke-width="0.7"/><polygon points="1108,76 1113,70 1125,70 1120,76" fill="#d9d9d9" stroke="#3b4453" stroke-width="0.7"/><polygon points="1108,82.0 1114,74.5 1126,74.5 1120,82.0" fill="#d9d9d9" stroke="#3b4453" stroke-width="0.7"/><polygon points="1118,80.5 1122.5,76.5 1126,81 1122,85.5" fill="#f5c86a"/><polygon points="1122.5,76.5 1125,74 1128,77 1126,81" fill="#f0f0f0"/><polygon points="1141,75.5 1146,70 1159,70 1154,75.5" fill="#d9d9d9" stroke="#3b4453" stroke-width="0.7"/><polygon points="1141,79.5 1146,74 1159,74 1154,79.5" fill="#d9d9d9" stroke="#3b4453" stroke-width="0.7"/><polygon points="1141,85.5 1147,78.5 1160,78.5 1154,85.5" fill="#d9d9d9" stroke="#3b4453" stroke-width="0.7"/><path d="M1150,72.5 Q1149,68 1143,68" fill="none" stroke="#6cc4f7" stroke-width="2"/><polygon points="1138.5,69 1143.5,65.5 1143.5,71.5" fill="#6cc4f7"/><polygon points="1173,77.5 1179,70 1193,70 1187,77.5" fill="#78c8f7" stroke="#3b4453" stroke-width="0.7"/><polygon points="1173,82.0 1178,77.5 1192,77.5 1187,82.0" fill="#d9d9d9" stroke="#3b4453" stroke-width="0.7"/><polygon points="1173,86.0 1178,81.5 1192,81.5 1187,86.0" fill="#d9d9d9" stroke="#3b4453" stroke-width="0.7"/><circle cx="1183.3" cy="68.5" r="3.8" fill="#dcdcdc"/><circle cx="953.5" cy="134.5" r="6.5" fill="#fdd47c"/><path d="M950.5,140 H956.5 V143 Q953.5,146 950.5,143 Z" fill="#f0f0f0"/><circle cx="977.6" cy="136.4" r="6.6" fill="#fdd47c"/><line x1="985.60" y1="136.40" x2="987.90" y2="136.40" stroke="#fdd47c" stroke-width="1.1"/><line x1="983.26" y1="142.06" x2="984.88" y2="143.68" stroke="#fdd47c" stroke-width="1.1"/><line x1="977.60" y1="144.40" x2="977.60" y2="146.70" stroke="#fdd47c" stroke-width="1.1"/><line x1="971.94" y1="142.06" x2="970.32" y2="143.68" stroke="#fdd47c" stroke-width="1.1"/><line x1="969.60" y1="136.40" x2="967.30" y2="136.40" stroke="#fdd47c" stroke-width="1.1"/><line x1="971.94" y1="130.74" x2="970.32" y2="129.12" stroke="#fdd47c" stroke-width="1.1"/><line x1="977.60" y1="128.40" x2="977.60" y2="126.10" stroke="#fdd47c" stroke-width="1.1"/><line x1="983.26" y1="130.74" x2="984.88" y2="129.12" stroke="#fdd47c" stroke-width="1.1"/><rect x="992.7" y="134.9" width="14.3" height="10.6" fill="#fdd47c"/><path d="M1002.3,135 V131.5 A3.6,3.6 0 0 1 1009.5,131.5 V133.5" fill="none" stroke="#fdd47c" stroke-width="2.2"/><rect x="999.2" y="138.5" width="1" height="3.2" fill="#a08040"/><rect x="1018.3" y="128.5" width="17.5" height="17.5" fill="#ffffff" stroke="#2a2f38" stroke-width="0.8"/><polygon points="1173.7,104.4 1183.5,104.4 1178.6000000000001,108.80000000000001" fill="#e8e8e8"/><polygon points="1176.9,135 1186.7,135 1181.8000000000002,139.4" fill="#e8e8e8"/><polygon points="1088,166.2 1098.5,166.2 1093.25,170.6" fill="#e8e8e8"/><polygon points="799,166.2 809,166.2 804.0,170.6" fill="#e8e8e8"/><polygon points="1330,166.2 1340.2,166.2 1335.1,170.6" fill="#e8e8e8"/><polygon points="1471.3,166.2 1481.0,166.2 1476.1499999999999,170.6" fill="#e8e8e8"/><polygon points="1683.4,166.2 1692.9,166.2 1688.15,170.6" fill="#e8e8e8"/><path fill-rule="evenodd" fill="#dcdcdc" d="M1232.2,100.5 L1244.2,64.8 H1252.2 L1264.6,100.5 H1258.3 L1254.9,91.8 H1241.5 L1238.2,100.5 Z M1243.3,86.5 H1253.1 L1248.2,71.5 Z"/><polygon points="1281.2,127.9 1287.2,127.9 1284.2,131.5" fill="#e2e2e2"/><path d="M1296.3,67 V72.2 M1314.8,67 V72.2 M1296.3,76.5 V84 M1305.5,76.5 V84 M1314.8,76.5 V84" stroke="#d8d8d8" stroke-width="0.9"/><path d="M1297.5,70 H1313.5 M1297.5,81 H1304.5 M1306.5,81 H1313.5 M1301,66.3 H1306.5 M1298.5,77.5 H1301.5 M1307,77.5 H1310" stroke="#6cc4f7" stroke-width="0.9"/><polygon points="1297,70 1299.5,68.5 1299.5,71.5" fill="#6cc4f7"/><polygon points="1314,70 1311.5,68.5 1311.5,71.5" fill="#6cc4f7"/><polygon points="1326,73 1332.2,73 1329.1,76.8" fill="#e2e2e2"/><path d="M1361.79,77.05 A3.33,3.33 0 0 1 1357.29,81.52 A3.69,3.69 0 0 1 1350.28,82.06 A3.45,3.45 0 0 1 1344.86,78.35 A3.06,3.06 0 0 1 1344.21,72.55 A3.33,3.33 0 0 1 1348.71,68.08 A3.69,3.69 0 0 1 1355.72,67.54 A3.45,3.45 0 0 1 1361.14,71.25 A3.06,3.06 0 0 1 1361.79,77.05" fill="none" stroke="#d8d8d8" stroke-width="0.9"/><polygon points="1373,73 1379,73 1376.0,76.8" fill="#e2e2e2"/><circle cx="1311" cy="102.3" r="3.5" fill="none" stroke="#e0e0e0" stroke-width="1"/><path d="M1307.5,102.3 H1303.5 L1298.5,110.5" fill="none" stroke="#e0e0e0" stroke-width="1"/><polygon points="1297,113.2 1297.5,107.5 1301.5,110.5" fill="#e0e0e0"/><polygon points="1326,104.1 1332.2,104.1 1329.1,107.89999999999999" fill="#e2e2e2"/><path d="M1346.5,102.5 H1344.8 V112" fill="none" stroke="#d8d8d8" stroke-width="0.9"/><polygon points="1343,111.5 1346.6,111.5 1344.8,114.2" fill="#d8d8d8"/><text x="1347.5" y="104.3" font-family="Liberation Sans" font-size="6.2" fill="#dcdcdc">09.A</text><polygon points="1373,104.1 1379,104.1 1376.0,107.89999999999999" fill="#e2e2e2"/><polygon points="1308.3,130 1314,133.2 1314,139.8 1308.3,143 1302.6,139.8 1302.6,133.2" fill="none" stroke="#d8d8d8" stroke-width="0.9"/><path d="M1302.6,136.5 H1299 V143" fill="none" stroke="#d8d8d8" stroke-width="0.9"/><rect x="1298" y="142.5" width="2" height="2" fill="#d8d8d8"/><path d="M1308.3,133.5 V139" stroke="#d8d8d8" stroke-width="0.8"/><polygon points="1326,135.2 1332.2,135.2 1329.1,139.0" fill="#e2e2e2"/><rect x="1343" y="129.3" width="19.6" height="15" fill="none" stroke="#d8d8d8" stroke-width="0.9"/><path d="M1343,132.5 H1362.6 M1343,136.5 H1362.6 M1343,140.5 H1362.6 M1346.5,132.5 V144.3 M1350.5,132.5 V144.3" stroke="#d8d8d8" stroke-width="0.8"/><polygon points="1373,135.2 1379,135.2 1376.0,139.0" fill="#e2e2e2"/><rect x="1413" y="78.8" width="35.5" height="7.9" fill="#fdd27a"/><rect x="1415.50" y="78.8" width="0.8" height="3" fill="#8a6a2a"/><rect x="1418.30" y="78.8" width="0.8" height="2" fill="#8a6a2a"/><rect x="1421.10" y="78.8" width="0.8" height="3" fill="#8a6a2a"/><rect x="1423.90" y="78.8" width="0.8" height="2" fill="#8a6a2a"/><rect x="1426.70" y="78.8" width="0.8" height="3" fill="#8a6a2a"/><rect x="1429.50" y="78.8" width="0.8" height="2" fill="#8a6a2a"/><rect x="1432.30" y="78.8" width="0.8" height="3" fill="#8a6a2a"/><rect x="1435.10" y="78.8" width="0.8" height="2" fill="#8a6a2a"/><rect x="1437.90" y="78.8" width="0.8" height="3" fill="#8a6a2a"/><rect x="1440.70" y="78.8" width="0.8" height="2" fill="#8a6a2a"/><rect x="1443.50" y="78.8" width="0.8" height="3" fill="#8a6a2a"/><rect x="1446.30" y="78.8" width="0.8" height="2" fill="#8a6a2a"/><polygon points="1427.6,132 1434.3999999999999,132 1431.0,135.6" fill="#e2e2e2"/><rect x="1486" y="73" width="12" height="12.5" fill="#f0f0f0"/><path d="M1489.5,76.5 H1495.5 M1489.5,79.3 H1495.5 M1489.5,82 H1495.5" stroke="#6cc4f7" stroke-width="1"/><rect x="1487.8" y="76" width="1" height="1" fill="#6cc4f7"/><rect x="1487.8" y="78.8" width="1" height="1" fill="#6cc4f7"/><rect x="1487.8" y="81.5" width="1" height="1" fill="#6cc4f7"/><polygon points="1484.5,65 1488.5,65 1486.5,68 1489.5,68 1483,73.5 1484.5,69.5 1481.5,69.5" fill="#f7c948"/><polygon points="1478,71 1478,84.5 1481,81.8 1483.3,86 1485.2,85 1483.2,81 1487,81" fill="#f0f0f0" stroke="#3b4453" stroke-width="0.6"/><rect x="1478.5" y="96.5" width="17.5" height="17.5" fill="none" stroke="#4fc078" stroke-width="0.9" stroke-dasharray="1.6,1.1"/><rect x="1484" y="98.5" width="10" height="10" fill="#78d39a"/><rect x="1480.2" y="102" width="9" height="10" fill="#78d39a" stroke="#3b4453" stroke-width="0.7"/><polygon points="1490,105 1490,116 1493,113.5 1494.5,116.3 1496,115.5 1494.5,112.5 1497.5,112.5" fill="#f0f0f0"/><rect x="1480" y="127" width="14.8" height="19.8" fill="#d8d8d8"/><rect x="1482.2" y="129.3" width="10.4" height="3.2" fill="#6a6a6a"/><rect x="1482.2" y="134.5" width="1.9" height="2" fill="#6a6a6a"/><rect x="1484.9" y="134.5" width="1.9" height="2" fill="#6a6a6a"/><rect x="1487.6" y="134.5" width="1.9" height="2" fill="#6a6a6a"/><rect x="1490.3" y="134.5" width="1.9" height="2" fill="#6a6a6a"/><rect x="1482.2" y="137.4" width="1.9" height="2" fill="#6a6a6a"/><rect x="1484.9" y="137.4" width="1.9" height="2" fill="#6a6a6a"/><rect x="1487.6" y="137.4" width="1.9" height="2" fill="#6a6a6a"/><rect x="1490.3" y="137.4" width="1.9" height="2" fill="#6a6a6a"/><rect x="1482.2" y="140.3" width="1.9" height="2" fill="#6a6a6a"/><rect x="1484.9" y="140.3" width="1.9" height="2" fill="#6a6a6a"/><rect x="1487.6" y="140.3" width="1.9" height="2" fill="#6a6a6a"/><rect x="1490.3" y="140.3" width="1.9" height="2" fill="#6a6a6a"/><rect x="1482.2" y="143.2" width="1.9" height="2" fill="#6a6a6a"/><rect x="1484.9" y="143.2" width="1.9" height="2" fill="#6a6a6a"/><rect x="1487.6" y="143.2" width="1.9" height="2" fill="#6a6a6a"/><rect x="1490.3" y="143.2" width="1.9" height="2" fill="#6a6a6a"/><polygon points="1471.3,166.2 1481.0,166.2 1476.1499999999999,170.6" fill="#e8e8e8"/><polygon points="1537.3,63.2 1556.3,83 1518.3,83" fill="#d8d8d8"/><rect x="1521.5" y="83" width="32" height="12.5" fill="#d8d8d8"/><path d="M1518.3,83.2 H1556.3 M1537.3,83 V95.5 M1528.5,74 V83 M1546.2,74 V83" stroke="#3b4453" stroke-width="0.9"/><path d="M1521.5,95.5 V100.7 M1553.5,95.5 V100.7 M1518.5,100.7 H1524.5 M1550.5,100.7 H1556.5" stroke="#d8d8d8" stroke-width="1"/><polygon points="1571,70 1575.5,65 1591.2,65 1586.5,70" fill="#78c4f5"/><rect x="1571" y="70" width="15.5" height="15.1" fill="#e4e4e4"/><polygon points="1586.5,70 1591.2,65 1591.2,80.5 1586.5,85.1" fill="#c0c0c0"/><path d="M1572.5,67.5 H1589" stroke="#3a9ae6" stroke-width="0.8" stroke-dasharray="1.5,1"/><circle cx="1579.8" cy="103.5" r="5.2" fill="none" stroke="#e0e0e0" stroke-width="1"/><path d="M1579.8,98.3 L1588,103.5 L1579.8,108.7 M1579.8,108.7 V116" fill="none" stroke="#e0e0e0" stroke-width="1"/><text x="1577.3" y="105.8" font-family="Liberation Sans" font-weight="bold" font-size="6.5" fill="#e0e0e0">A</text><circle cx="1581" cy="138.5" r="5" fill="none" stroke="#e0e0e0" stroke-width="1"/><path d="M1571,138 H1591 M1575.5,135 L1581,129.8 L1586.5,135" fill="none" stroke="#e0e0e0" stroke-width="1"/><rect x="1759" y="65" width="39" height="6.6" fill="#9a9a9a"/><rect x="1760" y="67" width="1.5" height="2.3" fill="#3b4453"/><rect x="1759" y="73" width="19" height="29" fill="#d8d8d8"/><rect x="1779" y="73" width="19" height="29" fill="#d8d8d8"/><rect x="1762" y="78" width="1.5" height="1.3" fill="#666"/><rect x="1765" y="78" width="9" height="1.3" fill="#666"/><rect x="1762" y="86.3" width="1.5" height="1.3" fill="#666"/><rect x="1765" y="86.3" width="9" height="1.3" fill="#666"/><rect x="1762" y="94.7" width="1.5" height="1.3" fill="#666"/><rect x="1765" y="94.7" width="9" height="1.3" fill="#666"/><polygon points="1783,78.5 1788,78.5 1793,82 1793,89 1783,89" fill="#666"/><rect x="1781" y="94.7" width="1.5" height="1.3" fill="#666"/><rect x="1784" y="94.7" width="10" height="1.3" fill="#666"/><polygon points="0,3 4,0 4,19 0,21" fill="#e85a86"/><rect x="4" y="0" width="20" height="19" fill="#e5104e"/><rect x="24" y="1" width="25" height="15" fill="#7d0a2c"/><path fill-rule="evenodd" fill="#ffffff" d="M9,14 L12.3,3 H15.7 L19,14 H16.5 L15.8,11.5 H12.2 L11.5,14 Z M12.8,9.5 H15.2 L14,5.5 Z"/><text x="27.5" y="12.3" font-family="Liberation Sans" font-weight="bold" font-size="9.5" fill="#ffffff" textLength="18.5" lengthAdjust="spacingAndGlyphs">ARC</text><polygon points="60,1 74,1 80,6 80,16.5 60,16.5" fill="#dedede"/><polygon points="74.5,1 80,5.8 74.5,5.8" fill="#ffffff"/><polygon points="90,1 96,1 98,3 106,3 106,7 110,7 107,17 90,17" fill="#d6d6d6"/><polygon points="94,8 110,8 106.5,17 90,17" fill="#dedede" stroke="#222831" stroke-width="0.6"/><polygon points="120,0 140,0 140,19 121.5,19 120,17.5" fill="#bcbcbc"/><rect x="124.5" y="0" width="11" height="6" fill="#f2f2f2" stroke="#555" stroke-width="0.6"/><rect x="125" y="13.5" width="10" height="5" fill="#f2f2f2"/><rect x="126" y="14.5" width="1.3" height="3" fill="#444"/><polygon points="150,0 167,0 167,16 151.5,16 150,14.5" fill="#bcbcbc"/><rect x="153.5" y="0" width="10" height="5" fill="#f2f2f2" stroke="#555" stroke-width="0.6"/><rect x="154" y="11.5" width="8" height="4" fill="#f2f2f2"/><polygon points="161,17 168,9.5 170,11.5 163,19" fill="#f5c86a"/><circle cx="169.3" cy="10.5" r="1.8" fill="#e8505a"/><polygon points="160,19 161,17 163,19" fill="#ddd"/><rect x="181" y="0" width="12" height="18" fill="#6a6a6a" stroke="#bcbcbc" stroke-width="1.2"/><polygon points="188,12 191,10 198,11 199,14 197,18 188,18" fill="#f5c86a"/><rect x="216" y="0" width="11" height="18" fill="#6a6a6a" stroke="#bcbcbc" stroke-width="1.2"/><path d="M212,6 H220" stroke="#6cc4f7" stroke-width="2"/><polygon points="223.5,6 219,2.5 219,9.5" fill="#6cc4f7"/><rect x="242.5" y="0" width="15" height="3" fill="#f0f0f0"/><rect x="240" y="2.5" width="20" height="12" rx="1" fill="#f0f0f0"/><rect x="243.5" y="12" width="13" height="7" fill="#f0f0f0"/><rect x="244.5" y="13" width="11" height="5" fill="#7cc8f7"/><path d="M276,8.5 H282 Q290,8.5 290,14" fill="none" stroke="#d6d6d6" stroke-width="3"/><polygon points="270,8.5 277,3 277,14" fill="#d6d6d6"/><polygon points="299,7 305,7 302.0,11" fill="#d6d6d6"/><path d="M328,8.5 H322 Q315,8.5 315,14" fill="none" stroke="#6b717a" stroke-width="3"/><polygon points="334.5,8.5 327.5,3 327.5,14" fill="#6b717a"/><polygon points="344,7 350,7 347.0,11" fill="#8a9099"/><rect x="362" y="0" width="1" height="22" fill="#4a5466"/><polygon points="376,3.5 393,3.5 393,17 377,17 376,16" fill="#e8e8e8"/><polygon points="381,3 388,3 384.5,7" fill="#222831"/><path d="M378,5 V15" stroke="#777" stroke-width="0.6"/><rect x="407" y="0" width="10" height="17" fill="#e8e8e8"/><rect x="416" y="6" width="5" height="7" fill="#e8e8e8" stroke="#222831" stroke-width="0.6"/><rect x="409.5" y="4" width="1.5" height="1.5" fill="#888"/><rect x="411.5" y="9" width="1.5" height="1.5" fill="#888"/><rect x="411.5" y="13" width="1.5" height="1.5" fill="#888"/><rect x="434.5" y="4" width="10" height="1.8" fill="#dcdcdc"/><polygon points="434.5,7.5 444.5,7.5 439.5,13" fill="#dcdcdc"/><polygon points="454,8.5 474,0 469.5,16 465,12.5 462,16.5 462,11.5" fill="#5ab6f2"/><path d="M462,11.5 L474,0" stroke="#3a8ed0" stroke-width="0.8"/><circle cx="1451" cy="8" r="5.5" fill="#4a4f57" stroke="#e8e8e8" stroke-width="1.6"/><path d="M1455,12 L1459.5,16" stroke="#d9a45a" stroke-width="2"/><polygon points="1203,4 1208.5,9 1203,14" fill="#e8e8e8"/><circle cx="1484" cy="7" r="5" fill="#6cc4f7"/><path d="M1474,19 Q1474,12 1484,12 Q1494,12 1494,19 Z" fill="#6cc4f7"/><polygon points="1607,7 1613,7 1610.0,11" fill="#e0e0e0"/><path d="M1628,3.5 H1631 L1633,13 H1643 L1644.5,6 H1632" fill="none" stroke="#c8c8c8" stroke-width="1.6"/><circle cx="1634" cy="16" r="1.5" fill="#c8c8c8"/><circle cx="1642" cy="16" r="1.5" fill="#c8c8c8"/><path d="M1665.5,2.5 L1658,15 H1673 Z" fill="none" stroke="#d8d8d8" stroke-width="2"/><circle cx="1665.5" cy="2.5" r="2.3" fill="#d8d8d8"/><circle cx="1658" cy="15" r="2.3" fill="#d8d8d8"/><circle cx="1673" cy="15" r="2.3" fill="#d8d8d8"/><polygon points="1683,7 1689,7 1686.0,11" fill="#e0e0e0"/><rect x="1702" y="0" width="1" height="19" fill="#4a5466"/><circle cx="1724" cy="9" r="10" fill="#d0d0d0"/><text x="1720" y="14" font-family="Liberation Sans" font-size="14" font-weight="bold" fill="#8a8a8a">?</text><polygon points="1744,7 1750,7 1747.0,11" fill="#e0e0e0"/><rect x="1840" y="13.5" width="11.5" height="2.4" fill="#e8e8e8"/><rect x="1868.5" y="6.5" width="10" height="8" fill="none" stroke="#e8e8e8" stroke-width="1.6"/><path d="M1872,3 H1882.5 V11" fill="none" stroke="#e8e8e8" stroke-width="1.6"/><path d="M1900.5,2.5 L1914.5,16.5 M1914.5,2.5 L1900.5,16.5" stroke="#e8e8e8" stroke-width="1.7"/><rect x="960" y="38.5" width="19" height="8.5" fill="#f0f0f0"/><polygon points="969.5,40.5 972.5,44 966.5,44" fill="#555"/><polygon points="983.5,41.5 990.0,41.5 986.75,45.0" fill="#e8e8e8"/><path d="M11,206.5 L20,187.5" stroke="#5a6270" stroke-width="1"/><path d="M213,206.5 L221,187.5" stroke="#5a6270" stroke-width="1"/><path d="M148.5,193 L157.5,202 M157.5,193 L148.5,202" stroke="#aab0b8" stroke-width="1.8"/><path d="M191.7,189.2 V204.8 M183.8,197 H199.6" stroke="#f0f0f0" stroke-width="2"/><line x1="819.5" y1="217" x2="819.5" y2="256.5" stroke="#2f6a2a" stroke-width="1"/><line x1="0" y1="708.5" x2="814.5" y2="708.5" stroke="#2e3442" stroke-width="1"/><line x1="820.5" y1="713.5" x2="820.5" y2="976" stroke="#2e3442" stroke-width="1"/><line x1="820.5" y1="760" x2="820.5" y2="823" stroke="#a4a5a7" stroke-width="1"/><line x1="820.5" y1="824" x2="820.5" y2="849" stroke="#c9cacc" stroke-width="1"/><line x1="1271.5" y1="708.5" x2="1919" y2="708.5" stroke="#5a2a2e" stroke-width="1"/><path d="M819.5,256.5 V707.5 H1271" fill="none" stroke="#ffffff" stroke-opacity="0.65" stroke-width="1"/><rect x="815.2" y="701.7" width="11" height="11.3" rx="1" fill="none" stroke="#c8cacc" stroke-width="1.3"/><path d="M1630.5,217 V261 M1630.5,268 V313 M1582,264.5 H1627 M1634,264.5 H1679" stroke="#ff00ff" stroke-width="1"/><rect x="1627.5" y="261.5" width="6" height="6" fill="none" stroke="#ff00ff" stroke-width="1"/><rect x="1845.3" y="234" width="13.7" height="4.8" fill="#e8e8e8"/><rect x="1871" y="231.5" width="9" height="9" fill="none" stroke="#e8e8e8" stroke-width="1.8"/><path d="M1874,229 H1883 V238" fill="none" stroke="#e8e8e8" stroke-width="1.8"/><path d="M1897,229 L1907,239 M1907,229 L1897,239" stroke="#e8e8e8" stroke-width="2.6"/><circle cx="1832.2" cy="333.5" r="57.2" fill="none" stroke="#454d58" stroke-width="14.3"/><rect x="1804.4" y="306.3" width="55.4" height="55.6" fill="#acacac"/><rect x="1815" y="317.2" width="34" height="33.8" fill="#a4a8ac"/><text x="1832.2" y="339.6" text-anchor="middle" font-family="Liberation Sans" font-weight="bold" font-size="16.5" fill="#4b5058" textLength="23" lengthAdjust="spacingAndGlyphs">TOP</text><text x="1832.2" y="282.3" text-anchor="middle" font-family="Liberation Sans" font-weight="bold" font-size="23.5" fill="#a9abae" stroke="#a9abae" stroke-width="0.4">N</text><text x="1832.2" y="402.8" text-anchor="middle" font-family="Liberation Sans" font-weight="bold" font-size="23.5" fill="#a9abae" stroke="#a9abae" stroke-width="0.4">S</text><text x="1772.2" y="342.6" text-anchor="middle" font-family="Liberation Sans" font-weight="bold" font-size="23.5" fill="#a9abae" stroke="#a9abae" stroke-width="0.4">W</text><text x="1892.7" y="342.6" text-anchor="middle" font-family="Liberation Sans" font-weight="bold" font-size="23.5" fill="#a9abae" stroke="#a9abae" stroke-width="0.4">E</text><rect x="1804.2" y="426.3" width="55.6" height="20.7" rx="4.5" fill="#9da1ab"/><text x="1808.5" y="440.7" font-family="Liberation Sans" font-size="12.8" fill="#5b5e64" textLength="29.5" lengthAdjust="spacingAndGlyphs">WCS</text><polygon points="1845.5,433.3 1854.5,433.3 1850,438.8" fill="#b0b4bc" stroke="#9095a0" stroke-width="0.6"/><rect x="238.8" y="765.2" width="2" height="2" fill="#b4b6b9"/><rect x="238.8" y="768.8" width="2" height="2" fill="#b4b6b9"/><rect x="242.5" y="765.2" width="2" height="2" fill="#b4b6b9"/><rect x="242.5" y="768.8" width="2" height="2" fill="#b4b6b9"/><rect x="246.2" y="765.2" width="2" height="2" fill="#b4b6b9"/><rect x="246.2" y="768.8" width="2" height="2" fill="#b4b6b9"/><rect x="249.9" y="765.2" width="2" height="2" fill="#b4b6b9"/><rect x="249.9" y="768.8" width="2" height="2" fill="#b4b6b9"/><rect x="253.6" y="765.2" width="2" height="2" fill="#b4b6b9"/><rect x="253.6" y="768.8" width="2" height="2" fill="#b4b6b9"/><rect x="257.3" y="765.2" width="2" height="2" fill="#b4b6b9"/><rect x="257.3" y="768.8" width="2" height="2" fill="#b4b6b9"/><path d="M242,781 L252,791 M252,781 L242,791" stroke="#a8aaad" stroke-width="2.3"/><path d="M240,825 L250,815" stroke="#a8aaad" stroke-width="3.2" stroke-linecap="round"/><path d="M256.24,811.84 A3.8,3.8 0 1 1 253.16,808.76" fill="none" stroke="#a8aaad" stroke-width="3"/><rect x="270" y="828.3" width="19.5" height="14.5" fill="#d0d0d0" stroke="#555" stroke-width="0.8"/><rect x="270" y="828.3" width="19.5" height="3" fill="#555"/><path d="M272.5,834.5 L275,837 L272.5,839.5 M276,840 H280" fill="none" stroke="#555" stroke-width="0.8"/><polygon points="292.5,834.3 301.5,834.3 297.0,839.0" fill="#555555"/><polygon points="1366,839 1376,839 1371,833.8" fill="#555555"/><path d="M149.5,1006 L157,986 M199,1006 L206.5,986" stroke="#5f6775" stroke-width="1"/><path d="M177.8,988.5 V1004 M169.8,996.2 H185.8" stroke="#e8e8e8" stroke-width="1.8"/><rect x="795.9" y="983.9" width="28.1" height="24.1" fill="#5e8fc4"/><rect x="826.2" y="983.9" width="27.8" height="24.1" fill="#5e8fc4"/><rect x="939.8" y="983.9" width="28.0" height="24.1" fill="#5e8fc4"/><rect x="991" y="983.9" width="27.5" height="24.1" fill="#5e8fc4"/><rect x="1021" y="983.9" width="28.0" height="24.1" fill="#5e8fc4"/><rect x="1135.7" y="983.9" width="27.8" height="24.1" fill="#5e8fc4"/><rect x="1166" y="983.9" width="27.6" height="24.1" fill="#5e8fc4"/><rect x="1724.5" y="983.9" width="28.2" height="24.1" fill="#5e8fc4"/><rect x="1758.7" y="983.9" width="28.0" height="24.1" fill="#5e8fc4"/><path d="M804.5,988 V1007 M809.5,988 V1007 M814.5,988 V1007 M800,992.6 H819 M800,997.5 H819 M800,1002.5 H819" stroke="#f2f2f2" stroke-width="1.2"/><rect x="832.1" y="990.0" width="3.2" height="3.2" fill="#f2f2f2"/><rect x="832.1" y="995.9" width="3.2" height="3.2" fill="#f2f2f2"/><rect x="832.1" y="1001.8" width="3.2" height="3.2" fill="#f2f2f2"/><rect x="837.9" y="990.0" width="3.2" height="3.2" fill="#f2f2f2"/><rect x="837.9" y="995.9" width="3.2" height="3.2" fill="#f2f2f2"/><rect x="837.9" y="1001.8" width="3.2" height="3.2" fill="#f2f2f2"/><rect x="843.8" y="990.0" width="3.2" height="3.2" fill="#f2f2f2"/><rect x="843.8" y="995.9" width="3.2" height="3.2" fill="#f2f2f2"/><rect x="843.8" y="1001.8" width="3.2" height="3.2" fill="#f2f2f2"/><polygon points="860,994.9 870,994.9 865.0,999.8" fill="#e0e0e0"/><path d="M887,991.4 V999.7 M882.7,995.5 H891.3" stroke="#d8d8d8" stroke-width="1.2"/><rect x="890.2" y="1000" width="12.6" height="5.5" fill="#d8d8d8"/><rect x="891.5" y="1001.2" width="1.3" height="3" fill="#3b4453"/><path d="M914.5,988 V1007.5 H933.5 M914.5,1002 H918.5 V1007.5" fill="none" stroke="#d8d8d8" stroke-width="1.1"/><circle cx="952.3" cy="997.7" r="8" fill="none" stroke="#f2f2f2" stroke-width="1.2"/><path d="M951,997.7 H963.5 M951,997.7 L961,987.5" stroke="#f2f2f2" stroke-width="1.1"/><polygon points="974,995 983.5,995 978.75,999.9" fill="#e0e0e0"/><path d="M995.5,1004 L1012,990.5 M995.5,1004.5 H1015" stroke="#f2f2f2" stroke-width="1.1"/><rect x="1001.5" y="996.5" width="3" height="3" fill="#f2f2f2"/><rect x="1026" y="990.5" width="18" height="17" fill="none" stroke="#f2f2f2" stroke-width="1.2"/><rect x="1024.5" y="988" width="4.5" height="4.5" fill="#5e8fc4" stroke="#f2f2f2" stroke-width="1"/><polygon points="1055,995 1064.5,995 1059.75,999.9" fill="#e0e0e0"/><rect x="1076" y="990" width="19.5" height="2" fill="#d8d8d8"/><rect x="1076" y="995" width="16" height="3.5" fill="#d8d8d8"/><rect x="1076" y="1001.5" width="19.5" height="4.5" fill="#d8d8d8"/><path d="M1109.5,988 V995 M1106,991.5 H1113" stroke="#d8d8d8" stroke-width="1"/><path d="M1111.5,996 H1121" stroke="#d8d8d8" stroke-width="1"/><rect x="1114.5" y="995" width="11.5" height="13" fill="#7bd59a"/><polygon points="1148.3,988 1151.3,998 1155.3,1007 1150.3,1004 1148.3,1008 1146.3,1004 1141.3,1007 1145.3,998" fill="#f2f2f2"/><circle cx="1156" cy="992.8" r="3" fill="none" stroke="#f2f2f2" stroke-width="1.1"/><polygon points="1177.5,988 1180.5,998 1184.5,1007 1179.5,1004 1177.5,1008 1175.5,1004 1170.5,1007 1174.5,998" fill="#f2f2f2"/><polygon points="1185,988.5 1188,988.5 1185.5,992.5 1188,992.5 1183,998 1184.5,993.5 1182.5,993.5" fill="#f2f2f2"/><polygon points="1209,988 1212,998 1216,1007 1211,1004 1209,1008 1207,1004 1202,1007 1206,998" fill="#d8d8d8"/><polygon points="1268.4,995 1278.2,995 1273.3000000000002,999.9" fill="#e0e0e0"/><circle cx="1301.2" cy="998" r="7" fill="none" stroke="#d8d8d8" stroke-width="4"/><rect x="1299.4" y="987.7" width="3.6" height="4" fill="#d8d8d8" transform="rotate(0 1301.2 998)"/><rect x="1299.4" y="987.7" width="3.6" height="4" fill="#d8d8d8" transform="rotate(45 1301.2 998)"/><rect x="1299.4" y="987.7" width="3.6" height="4" fill="#d8d8d8" transform="rotate(90 1301.2 998)"/><rect x="1299.4" y="987.7" width="3.6" height="4" fill="#d8d8d8" transform="rotate(135 1301.2 998)"/><rect x="1299.4" y="987.7" width="3.6" height="4" fill="#d8d8d8" transform="rotate(180 1301.2 998)"/><rect x="1299.4" y="987.7" width="3.6" height="4" fill="#d8d8d8" transform="rotate(225 1301.2 998)"/><rect x="1299.4" y="987.7" width="3.6" height="4" fill="#d8d8d8" transform="rotate(270 1301.2 998)"/><rect x="1299.4" y="987.7" width="3.6" height="4" fill="#d8d8d8" transform="rotate(315 1301.2 998)"/><polygon points="1321.3,995 1330.7,995 1326.0,999.9" fill="#e0e0e0"/><path d="M1351.5,987.5 V1008 M1342,997.8 H1361" stroke="#d8d8d8" stroke-width="1.8"/><polygon points="1476,995 1486,995 1481.0,999.9" fill="#e0e0e0"/><path d="M1498,999 L1507,994 L1516.5,999 L1507,1004 Z" fill="#5ab4ec"/><path d="M1498,999 V1004 L1507,1008.5 L1516.5,1004 V999" fill="none" stroke="#c8c8c8" stroke-width="1"/><path d="M1500,993 Q1507,986 1514,993" fill="none" stroke="#c8c8c8" stroke-width="0.9" stroke-dasharray="1.5,1"/><path d="M1609,998 L1617,994 L1624.2,998 V1006 L1617,1008 L1609,1006 Z M1609,998 L1617,1002 L1624.2,998 M1617,1002 V1008" fill="none" stroke="#d8d8d8" stroke-width="1"/><path d="M1606,990 H1610 L1606,995 H1610" fill="none" stroke="#d8d8d8" stroke-width="0.9"/><rect x="1605.5" y="1000" width="4" height="4" fill="none" stroke="#c8876a" stroke-width="1"/><rect x="1692" y="988" width="7" height="7" fill="none" stroke="#d8d8d8" stroke-width="1"/><circle cx="1707.5" cy="996.5" r="4" fill="none" stroke="#d8d8d8" stroke-width="1"/><polygon points="1700,1001 1704,1008 1696,1008" fill="none" stroke="#d8d8d8" stroke-width="1"/><rect x="1731.5" y="993" width="12.5" height="13" fill="none" stroke="#f2f2f2" stroke-width="1.1"/><path d="M1731.5,993 L1735,990 H1747 L1744,993 M1747,990 V1003 L1744,1006" fill="none" stroke="#f2f2f2" stroke-width="1.1"/><path d="M1733,1004 L1742,995 M1733,999 L1737,995 M1737,1005 L1743,999" stroke="#f2f2f2" stroke-width="0.8"/><path d="M1764.5,1001.5 L1773,995.5 H1781 L1772.5,1001.5 Z M1764.5,998 L1773,992 H1781 L1772.5,998" fill="none" stroke="#f2f2f2" stroke-width="1.4"/><rect x="1792" y="985" width="23" height="15" fill="#3c7cc4"/><path d="M1798.5,983.5 V995 M1793,989 H1804" stroke="#f0f0f0" stroke-width="1.4"/><circle cx="1798.5" cy="989" r="2" fill="#f0f0f0"/><rect x="1792" y="999" width="10" height="6" fill="#f5b82e"/><path d="M1803,1003 L1807,1007 L1814,999" fill="none" stroke="#4cc06a" stroke-width="2.3"/><rect x="1825.5" y="988" width="20" height="16" fill="#c8c8c8"/><path d="M1827,1000 L1831,991 L1836,1000 L1840,991" fill="none" stroke="#555" stroke-width="0.8"/><polygon points="1836.5,1008 1840,1000 1843.5,1008" fill="#f29a5a"/><rect x="1864" y="990.5" width="19.5" height="15" fill="none" stroke="#d8d8d8" stroke-width="1"/><path d="M1867,1003 L1872,998 M1880.5,993.5 L1876,998" stroke="#d8d8d8" stroke-width="1"/><polygon points="1866.5,1003.5 1866.5,999 1871,1003.5" fill="#d8d8d8"/><polygon points="1881,993 1876.5,993 1881,997.5" fill="#d8d8d8"/><rect x="1893.6" y="988" width="20.4" height="2.2" fill="#d8d8d8"/><rect x="1893.6" y="996.5" width="20.4" height="2.2" fill="#d8d8d8"/><rect x="1893.6" y="1005" width="20.4" height="2.2" fill="#d8d8d8"/></svg></body></html>
